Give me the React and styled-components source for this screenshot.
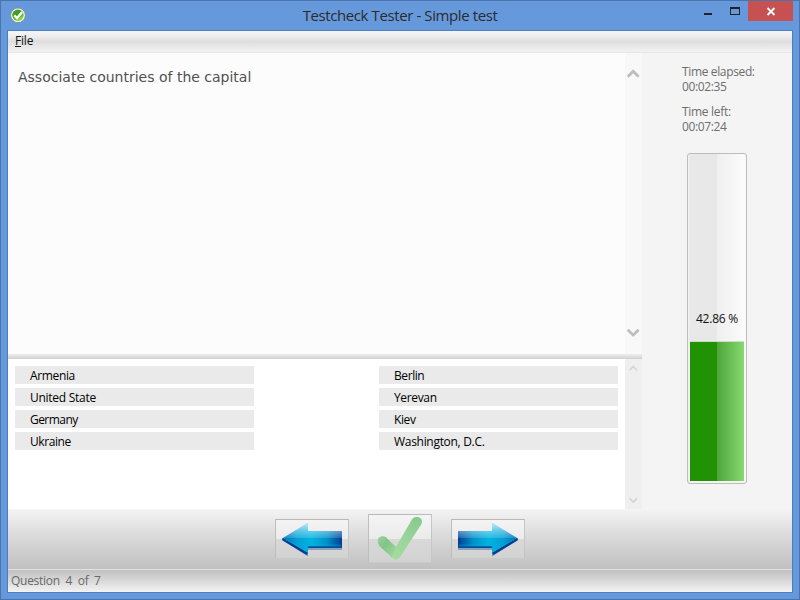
import React from "react";
import styled, { createGlobalStyle } from "styled-components";

const GlobalStyle = createGlobalStyle`
  * { box-sizing: border-box; }
  html, body { margin: 0; padding: 0; overflow: hidden; }
  svg { display: block; }
`;

const ui = `"Open Sans", "Noto Sans", sans-serif`;

const Window = styled.div`
  width: 800px;
  height: 600px;
  display: flex;
  flex-direction: column;
  background: #6699db;
  border: 1px solid #4b74ac;
  padding: 0 6px 6px;
  font-family: ${ui};
  font-size: 12px;
  color: #111;
  cursor: default;
`;

const TitleBar = styled.header`
  height: 29px;
  flex: none;
  display: grid;
  grid-template-columns: 104px 1fr 104px;
`;

const AppIcon = styled.div`
  padding: 5px 0 0 3px;
`;

const Title = styled.h1`
  margin: 0;
  padding-top: 3px;
  text-align: center;
  font: 400 15px/22px ${ui};
  letter-spacing: ${(p) => p.$spacing}px;
  color: #2b2b2b;
  white-space: nowrap;
`;

const WindowControls = styled.div`
  display: flex;
  justify-content: flex-end;
  align-items: flex-start;
`;

const ControlButton = styled.button`
  width: ${(p) => p.$width}px;
  height: 20px;
  padding: 0;
  border: 0;
  background: ${(p) => (p.$close ? "#c75050" : "transparent")};
`;

const Client = styled.main`
  flex: 1;
  min-height: 0;
  display: flex;
  flex-direction: column;
  border: 1px solid #4d7ebf;
  background: #f4f4f4;
`;

const MenuBar = styled.nav`
  height: 22px;
  flex: none;
  padding-left: 7px;
  border-bottom: 1px solid #e6e6e6;
  background: linear-gradient(#f6f6f6, #eeeeee 25%, #dedede 50%, #e8e8e8 75%, #f3f3f3);
  line-height: 20px;
`;

const Text = styled.span`
  display: inline-block;
  white-space: pre;
  letter-spacing: ${(p) => p.$spacing || 0}px;
`;

const Body = styled.div`
  height: 456px;
  flex: none;
  display: grid;
  grid-template-columns: 634px 1fr;
`;

const Work = styled.section`
  display: grid;
  grid-template-rows: 301px 5px 150px;
`;

const Pane = styled.div`
  display: grid;
  grid-template-columns: 1fr 17px;
  background: ${(p) => p.$background};
`;

const Question = styled.p`
  margin: 0;
  padding: 13px 10px;
  font: 14px/22px "DejaVu Sans", sans-serif;
  color: #505050;
`;

const ScrollTrack = styled.div`
  display: flex;
  flex-direction: column;
  align-items: center;
  justify-content: space-between;
  padding: ${(p) => p.$padding};
  background: ${(p) => p.$background};
`;

const Splitter = styled.div`
  background: linear-gradient(#efefef, #d0d0d0);
`;

const Matching = styled.div`
  display: flex;
  justify-content: space-between;
  padding: 7px;
`;

const AnswerList = styled.ul`
  width: 239px;
  margin: 0;
  padding: 0;
  list-style: none;
  display: flex;
  flex-direction: column;
  gap: 4px;
`;

const Answer = styled.li`
  height: 18px;
  padding-left: 15px;
  background: #eaeaea;
  color: #000;
  line-height: 19px;
`;

const Side = styled.aside`
  padding: 11px 0 0 40px;
  color: #6d6d6d;
`;

const TimeBlock = styled.div`
  height: 40px;
  line-height: 15px;
  display: flex;
  flex-direction: column;
  align-items: flex-start;
`;

const Meter = styled.div`
  position: relative;
  width: 60px;
  height: 331px;
  margin: 9px 0 0 5px;
  padding: 2px;
  display: flex;
  flex-direction: column;
  justify-content: flex-end;
  border: 1px solid #bcbcbc;
  border-radius: 3px;
  background: linear-gradient(90deg, #f0f0f0 0 1px, #e8e8e8 2px 29px, #efefef 29px, #fbfbfb 56px);
`;

const MeterFill = styled.div`
  width: 54px;
  box-shadow: 0 -1px #cbdfc5, 0 2px #f5f5f5, -1px 0 #f0f0f0, 1px 0 #f8f8f8;
  background: linear-gradient(90deg, #219203 0 27px, #4fa53b 27px, #87d96f 54px);
`;

const MeterLabel = styled.div`
  position: absolute;
  inset: 155px 0 auto 8px;
  line-height: 20px;
  color: #111;
`;

const Toolbar = styled.div`
  height: 60px;
  flex: none;
  display: flex;
  align-items: flex-start;
  padding: 5px 0 0 267px;
  background: linear-gradient(#f4f4f4, #dedede 38%, #c0c0c0);
`;

const ToolButton = styled.button`
  width: ${(p) => p.$width}px;
  height: ${(p) => p.$height}px;
  margin: ${(p) => p.$margin};
  padding: 0;
  border: 1px solid;
  border-color: #bababa #c6c6c6 #c9c9c9 #bebebe;
  background: linear-gradient(#f4f4f4, #ebebeb 50%, #d9d9d9 50%, #d2d2d2);
`;

const StatusBar = styled.footer`
  flex: 1;
  padding-left: 3px;
  border-top: 1px solid #e2e2e2;
  background: linear-gradient(#c0c0c0, #f3f3f3);
  line-height: 21px;
  color: #686868;
`;

const Check = () => (
  <svg width="16" height="18" viewBox="0 0 16 18">
    <defs>
      <linearGradient id="ball" x2=".6" y2="1">
        <stop offset="0" stopColor="#4f9a41" />
        <stop offset=".5" stopColor="#35a01c" />
        <stop offset="1" stopColor="#8ee34c" />
      </linearGradient>
    </defs>
    <circle cx="8" cy="9.3" r="7.4" fill="#f1f4ee" stroke="#7d8c86" strokeWidth=".9" />
    <circle cx="8" cy="9.2" r="5.7" fill="url(#ball)" />
    <path d="M4.2 9.4 7 12 12.2 6" fill="none" stroke="#fff" strokeWidth="2.3" />
  </svg>
);

const Arrow = ({ next }) => (
  <svg width={next ? 72 : 72} height="38" viewBox="0 0 72 38">
    <defs>
      <linearGradient id={next ? "arrowN" : "arrowP"} gradientUnits="userSpaceOnUse" x1="6" x2="66" y1="0" y2="0">
        <stop offset="0" stopColor="#0068b0" />
        <stop offset=".25" stopColor="#00a0d4" />
        <stop offset=".5" stopColor="#00b4e0" />
        <stop offset=".75" stopColor="#008fca" />
        <stop offset="1" stopColor="#003f92" />
      </linearGradient>
      <linearGradient id={next ? "glossN" : "glossP"} gradientUnits="userSpaceOnUse" x1="0" x2="0" y1="3" y2="18">
        <stop offset="0" stopColor="#fff" stopOpacity=".75" />
        <stop offset=".55" stopColor="#e3f4ff" stopOpacity=".42" />
        <stop offset="1" stopColor="#e3f8ff" stopOpacity=".16" />
      </linearGradient>
      <clipPath id={next ? "topN" : "topP"}>
        <rect width="72" height="18" />
      </clipPath>
    </defs>
    <g transform={next ? "translate(72 0) scale(-1 1)" : undefined}>
      <path d="M7 20.5 32 36.5V30H66V27H31Z" fill="#003c83" opacity=".35" />
      <path d="M6 18.5 32 3V11H66V28H32V35Z" fill={`url(#${next ? "arrowN" : "arrowP"})`} />
      <path d="M6.5 19 31.2 33.8" fill="none" stroke="#003f91" strokeWidth="2.6" />
      <path d="M32 27.2H66" stroke="#00549f" strokeWidth="1.8" />
      <path d="M8 18.5 31.5 31.8" fill="none" stroke="#18b9e6" strokeWidth=".8" strokeDasharray="1.5 .6" />
      <path d="M32 25.2H65" stroke="#12aadd" strokeWidth=".8" opacity=".7" />
      <path
        d="M6 18.5 32 3V11H66V28H32V35Z"
        fill={`url(#${next ? "glossN" : "glossP"})`}
        clipPath={`url(#${next ? "topN" : "topP"})`}
      />
    </g>
  </svg>
);

const BigCheck = () => (
  <svg width="62" height="47" viewBox="0 0 62 47">
    <defs>
      <linearGradient id="tick" x1="1" y1="0" x2=".3" y2="1">
        <stop offset="0" stopColor="#86c88c" />
        <stop offset=".5" stopColor="#99d49b" />
        <stop offset="1" stopColor="#a6dd9e" />
      </linearGradient>
      <linearGradient id="tickShort" x1="0" y1="0" x2="1" y2="1">
        <stop offset="0" stopColor="#9ad09c" />
        <stop offset=".4" stopColor="#83c388" />
        <stop offset="1" stopColor="#a4da9f" />
      </linearGradient>
    </defs>
    <path d="M9 27C8 23 11 21.5 14 21.5C17 21.5 18 23 19 24.5L27 32 42 6C44 2 46 2 48.5 2C52 2.5 54 5 52.5 9L31 42Q27 47 23 42.5L10.5 31Q9 29.5 9 27Z" fill="url(#tick)" />
    <path d="M9 27C8 23 11 21.5 14 21.5C17 21.5 18 23 19 24.5L27 32 23 42.5 10.5 31Q9 29.5 9 27Z" fill="url(#tickShort)" />
  </svg>
);

const Chevron = ({ small, down }) => (
  <svg width={small ? 9 : 13} height={small ? 8 : 11} viewBox="0 0 12 10">
    <path
      d={down ? "M.7 1.5 5.7 6.5 10.7 1.5" : "M.7 8 5.7 3 10.7 8"}
      fill="none"
      stroke={small ? "#d3d3d3" : "#bdbdbd"}
      strokeWidth={small ? 2 : 2.6}
    />
  </svg>
);

const left = [["Armenia", -0.36], ["United State", -0.27], ["Germany", -0.55], ["Ukraine", -0.42]];
const right = [["Berlin", -0.42], ["Yerevan", -0.35], ["Kiev", -0.4], ["Washington, D.C.", -0.3]];

const Answers = ({ items }) => (
  <AnswerList>
    {items.map(([name, spacing]) => (
      <Answer key={name}><Text $spacing={spacing}>{name}</Text></Answer>
    ))}
  </AnswerList>
);

export default function App() {
  return (
    <>
      <GlobalStyle />
      <Window>
        <TitleBar>
          <AppIcon><Check /></AppIcon>
          <Title $spacing={-0.4}>Testcheck Tester - Simple test</Title>
          <WindowControls>
            <ControlButton $width={27} aria-label="Minimize">
              <svg width="27" height="20"><path d="M10 12h8v2h-8z" fill="#222" /></svg>
            </ControlButton>
            <ControlButton $width={27} aria-label="Maximize">
              <svg width="27" height="20"><path d="M9 6h10v8H9zM10 8h8v5h-8z" fill="#222" fillRule="evenodd" /></svg>
            </ControlButton>
            <ControlButton $width={45} $close aria-label="Close">
              <svg width="45" height="20"><path d="m19.5 7 7 7m0-7-7 7" stroke="#fff" strokeWidth="1.9" /></svg>
            </ControlButton>
          </WindowControls>
        </TitleBar>
        <Client>
          <MenuBar><Text $spacing={-0.2}><u>F</u>ile</Text></MenuBar>
          <Body>
            <Work>
              <Pane $background="#fcfcfc">
                <Question>Associate countries of the capital</Question>
                <ScrollTrack $background="#f8f8f8" $padding="15px 0 15px">
                  <Chevron /><Chevron down />
                </ScrollTrack>
              </Pane>
              <Splitter />
              <Pane $background="#fff">
                <Matching>
                  <Answers items={left} />
                  <Answers items={right} />
                </Matching>
                <ScrollTrack $background="#efefef" $padding="5px 0 4px">
                  <Chevron small /><Chevron small down />
                </ScrollTrack>
              </Pane>
            </Work>
            <Side>
              <TimeBlock><Text $spacing={-0.36}>Time elapsed:</Text><Text $spacing={-0.38}>00:02:35</Text></TimeBlock>
              <TimeBlock><Text $spacing={-0.3}>Time left:</Text><Text $spacing={-0.38}>00:07:24</Text></TimeBlock>
              <Meter>
                <MeterFill style={{ height: 139 }} />
                <MeterLabel><Text $spacing={-0.25}>42.86 %</Text></MeterLabel>
              </Meter>
            </Side>
          </Body>
          <Toolbar>
            <ToolButton $width={74} $height={40} $margin="5px 19px 0 0" aria-label="Previous"><Arrow /></ToolButton>
            <ToolButton $width={64} $height={49} $margin="0 19px 0 0" aria-label="Confirm"><BigCheck /></ToolButton>
            <ToolButton $width={74} $height={40} $margin="5px 0 0 0" aria-label="Next"><Arrow next /></ToolButton>
          </Toolbar>
          <StatusBar><Text $spacing={-0.28}>Question  4  of  7</Text></StatusBar>
        </Client>
      </Window>
    </>
  );
}
